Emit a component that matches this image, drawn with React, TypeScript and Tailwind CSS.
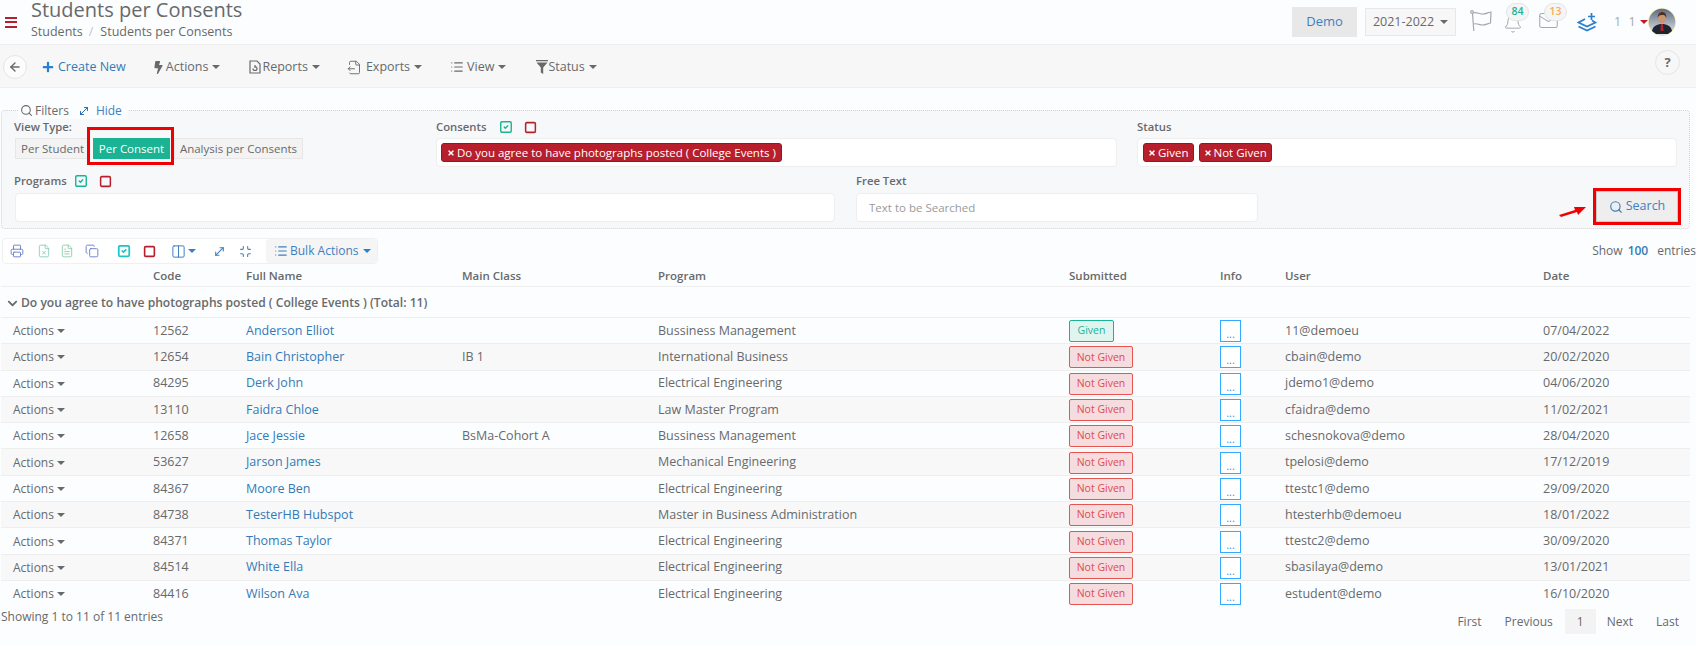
import { ArrowLeft, Bell, Columns2, Copy, FileOutput, FileText, FileX, List, Mail, Minimize, MoveDiagonal, Printer, Search, Square, SquareCheck } from 'lucide-react';
import { FaBolt, FaChevronDown, FaPlus, FaTimes } from 'react-icons/fa';

const rows = [
  ['12562', 'Anderson Elliot', '', 'Bussiness Management', 'Given', '11@demoeu', '07/04/2022'],
  ['12654', 'Bain Christopher', 'IB 1', 'International Business', 'Not Given', 'cbain@demo', '20/02/2020'],
  ['84295', 'Derk John', '', 'Electrical Engineering', 'Not Given', 'jdemo1@demo', '04/06/2020'],
  ['13110', 'Faidra Chloe', '', 'Law Master Program', 'Not Given', 'cfaidra@demo', '11/02/2021'],
  ['12658', 'Jace Jessie', 'BsMa-Cohort A', 'Bussiness Management', 'Not Given', 'schesnokova@demo', '28/04/2020'],
  ['53627', 'Jarson James', '', 'Mechanical Engineering', 'Not Given', 'tpelosi@demo', '17/12/2019'],
  ['84367', 'Moore Ben', '', 'Electrical Engineering', 'Not Given', 'ttestc1@demo', '29/09/2020'],
  ['84738', 'TesterHB Hubspot', '', 'Master in Business Administration', 'Not Given', 'htesterhb@demoeu', '18/01/2022'],
  ['84371', 'Thomas Taylor', '', 'Electrical Engineering', 'Not Given', 'ttestc2@demo', '30/09/2020'],
  ['84514', 'White Ella', '', 'Electrical Engineering', 'Not Given', 'sbasilaya@demo', '13/01/2021'],
  ['84416', 'Wilson Ava', '', 'Electrical Engineering', 'Not Given', 'estudent@demo', '16/10/2020'],
];

const cols = 'grid grid-cols-[152px_93px_216px_196px_217px_194px_151px_65px_258px_1fr]';

function Caret({ className = '' }: { className?: string }) {
  return <span className={`inline-block h-0 w-0 border-x-[4px] border-t-[4px] border-x-transparent border-t-current ${className}`} />;
}

function ToolbarItem({ icon, label, className }: { icon: React.ReactNode; label: string; className: string }) {
  return (
    <div className={`flex items-center ${className}`}>
      {icon}
      <span>{label}</span>
      <Caret className="ml-[4px]" />
    </div>
  );
}

function Tag({ label, tight }: { label: string; tight?: boolean }) {
  return (
    <span className={`flex h-[19px] items-center gap-[2px] rounded-[3px] border border-[#8f1823] bg-[#b71f2d] text-[11.500px] text-white whitespace-nowrap ${tight ? 'px-[4px]' : 'px-[5px]'}`}>
      <FaTimes size={8} />
      {label}
    </span>
  );
}

function FieldLabel({ label, toggles, gap }: { label: string; toggles?: boolean; gap?: string }) {
  return (
    <div className="flex h-[16px] items-center text-[11.300px] font-semibold text-[#676a6c]">
      <span className="whitespace-nowrap">{label}</span>
      {toggles && (
        <>
          <SquareCheck size={14} strokeWidth={2.4} className={`text-[#1ab394] ${gap}`} />
          <Square size={13} strokeWidth={2.8} className="ml-[11px] text-[#b71f2d]" />
        </>
      )}
    </div>
  );
}

function Avatar() {
  return (
    <svg width="28" height="28" viewBox="0 0 28 28">
      <defs>
        <linearGradient id="avatarBg" x1="0" y1="0" x2="0" y2="1">
          <stop offset="0" stopColor="#5d6b80" />
          <stop offset="1" stopColor="#e8ebf0" />
        </linearGradient>
      </defs>
      <circle cx="14" cy="14" r="13.7" fill="#eed98a" />
      <circle cx="14" cy="14" r="13.2" fill="url(#avatarBg)" />
      <path d="M4 23c1-5 5-7 10-7s9 2 10 7l-4 3H8z" fill="#1d2530" />
      <path d="M13 16h2l.6 7h-3.200z" fill="#b0212c" />
      <ellipse cx="14" cy="10.500" rx="4" ry="5" fill="#c99474" />
      <path d="M9.800 10c-.4-4 2-6 4.400-6s4.600 2 4 6c-.8-2.500-2-3-4.200-3s-3.500.6-4.200 3z" fill="#51301e" />
    </svg>
  );
}

export default function App() {
  return (
    <div className="h-[645px] w-[1696px] overflow-hidden bg-[#fcfdfe] font-['Open_Sans',sans-serif] text-[12.500px] text-[#676a6c]">
      {/* top bar */}
      <header className="flex h-[45px] items-center border-b border-[#eeeeee] pl-[5px]">
        <div className="flex w-[12px] flex-col gap-[2.500px]">
          <span className="h-[2px] bg-[#b71f2d]" />
          <span className="h-[2px] bg-[#b71f2d]" />
          <span className="h-[2px] bg-[#b71f2d]" />
        </div>
        <div className="ml-[14px] flex h-[45px] flex-col">
          <h1 className="mt-[-4px] h-[27px] text-[20px] leading-[27px] whitespace-nowrap">Students per Consents</h1>
          <div className="mt-[0.5px] flex gap-[6px] leading-[18px]">
            <span>Students</span>
            <span className="text-[#c4c4c4]">/</span>
            <span className="ml-[1px]">Students per Consents</span>
          </div>
        </div>
        <div className="ml-auto flex items-center pr-[20px]">
          <div className="flex h-[30px] w-[65px] items-center justify-center bg-[#e8e8e8] text-[13px] text-[#3f7fc1]">Demo</div>
          <div className="ml-[8px] flex h-[28px] w-[91px] items-center justify-center gap-[6px] border border-[#e8e8e8] bg-[#f7f7f8]">
            2021-2022
            <Caret />
          </div>
          <svg width="22" height="22" viewBox="0 0 22 22" fill="none" stroke="#a3a9ae" strokeWidth="1.200" className="mt-[-2px] ml-[14px]">
            <circle cx="2" cy="2" r="1.300" />
            <path d="M2.500 3.500 3.800 21" />
            <path d="M3 3c4-1.500 6 1.500 10 1 3 0 6-2 8-2l-.5 11c-2.500 .5-5 2-8 2-3.500 0-5-2-8.500-1" />
          </svg>
          <div className="relative ml-[11px] h-[30px] w-[24px]">
            <Bell size={20} strokeWidth={1.200} className="absolute top-[7px] left-0 text-[#a3a9ae]" />
            <span className="absolute top-[-4px] left-[3px] flex h-[18px] w-[23px] items-center justify-center rounded-full border border-[#e5e5e5] bg-[#f5f5f5] text-[10.500px] font-semibold text-[#1ab394]">84</span>
          </div>
          <div className="relative ml-[11px] h-[30px] w-[29px]">
            <Mail size={21} strokeWidth={1.200} className="absolute top-[3px] left-0 text-[#a3a9ae]" />
            <span className="absolute top-[-4px] left-[6px] flex h-[18px] w-[23px] items-center justify-center rounded-full border border-[#e5e5e5] bg-[#f5f5f5] text-[10.500px] font-semibold text-[#f8ac59]">13</span>
          </div>
          <svg width="20" height="19" viewBox="0 0 20 19" fill="none" stroke="#2a7fd0" strokeWidth="1.700" className="ml-[10px]">
            <path d="M8 6 1.500 9.500 10 13.500 18.500 9.500 15 7.500" />
            <path d="M1.500 13.500 10 17.500 18.500 13.500" />
            <path d="M14.500 0v7M11 3.500h7" />
          </svg>
          <span className="ml-[17px] w-[17px] tracking-[2px] whitespace-nowrap text-[#a3a9ae]">1 1</span>
          <Caret className="ml-[9px] text-[#b71f2d]" />
          <Avatar />
        </div>
      </header>

      {/* action toolbar */}
      <div className="flex h-[43px] items-center border-b border-[#eeeeee] bg-[#f7f7f7] pt-[2px] pr-[16px] pl-[3px]">
        <div className="flex h-[24px] w-[24px] items-center justify-center rounded-full border border-[#e5e5e5] bg-[#fcfcfc]">
          <ArrowLeft size={14} strokeWidth={2.400} className="text-[#676a6c]" />
        </div>
        <div className="ml-[15px] flex items-center text-[#337ab7]">
          <FaPlus size={12} className="text-[#2a7fd0]" />
          <span className="ml-[4px]">Create New</span>
        </div>
        <ToolbarItem className="ml-[26px]" label="Actions" icon={<FaBolt size={13} className="mr-[1px]" />} />
        <ToolbarItem
          className="ml-[29px]"
          label="Reports"
          icon={
            <svg width="12" height="14" viewBox="0 0 12 14" fill="none" stroke="currentColor" strokeWidth="1.200" className="mr-[1px]">
              <path d="M1 1h7l3 3v9H1z" />
              <path d="M4 8.500a2 2 0 1 0 2-2M6 5v3" />
            </svg>
          }
        />
        <ToolbarItem className="ml-[27px]" label="Exports" icon={<FileOutput size={15} strokeWidth={1.500} className="mr-[4px]" />} />
        <ToolbarItem className="ml-[28px]" label="View" icon={<List size={14} className="mr-[3px]" />} />
        <ToolbarItem
          className="ml-[30px]"
          label="Status"
          icon={
            <svg width="12" height="14" viewBox="0 0 12 14" fill="currentColor">
              <path d="M0 0h12v1.200H0zM.5 2.500h11L7.200 7.500V14l-2.400-1.500v-5z" />
            </svg>
          }
        />
        <div className="mt-[-9px] ml-auto flex h-[25px] w-[25px] items-center justify-center rounded-full border border-[#e5e5e5] text-[13px] font-bold">?</div>
      </div>

      {/* filters */}
      <section className="relative mt-[22px] ml-[1px] h-[119px] w-[1689px] rounded-[4px] border border-dotted border-[#d4d4d4] bg-[#f7f8fa] pt-[8px] pl-[12px]">
        <div className="absolute top-[-9px] left-[16px] flex h-[17px] items-center bg-[#fcfdfe] pr-[6px] pl-[2px] text-[12px]">
          <Search size={13} />
          <span className="ml-[2px]">Filters</span>
          <MoveDiagonal size={12} className="ml-[9px] text-[#2a6db5]" />
          <span className="ml-[6px] text-[#3f7fc1]">Hide</span>
        </div>
        <div className="flex">
          <div className="w-[422px]">
            <FieldLabel label="View Type:" />
            <div className="mt-[3px] ml-[1px] flex h-[21px] items-center text-[11.500px]">
              <span className="flex h-[21px] w-[75px] items-center border border-[#e7e7e7] bg-[#f3f3f3] pl-[5px] whitespace-nowrap">Per Student</span>
              <span className="relative ml-[3px] flex h-[21px] w-[77px] items-center justify-center bg-[#1ab394] text-white">
                Per Consent
                <span className="absolute top-[-11px] right-[-4px] bottom-[-6px] left-[-6px] border-[3px] border-[#f00000]" />
              </span>
              <span className="ml-[4px] flex h-[21px] w-[129px] items-center justify-center border border-[#e7e7e7] bg-[#f3f3f3] whitespace-nowrap">Analysis per Consents</span>
            </div>
          </div>
          <div className="w-[681px]">
            <FieldLabel label="Consents" toggles gap="ml-[13px]" />
            <div className="mt-[3px] flex h-[29px] items-center rounded-[4px] border border-[#eeeeee] bg-white pl-[4px]">
              <Tag label="Do you agree to have photographs posted ( College Events )" />
            </div>
          </div>
          <div className="ml-[20px] w-[540px]">
            <FieldLabel label="Status" />
            <div className="mt-[3px] flex h-[29px] items-center gap-[5px] rounded-[4px] border border-[#eeeeee] bg-white pl-[5px]">
              <Tag tight label="Given" />
              <Tag tight label="Not Given" />
            </div>
          </div>
        </div>
        <div className="mt-[6px] flex">
          <div className="ml-[1px] w-[820px]">
            <div className="ml-[-1px]">
              <FieldLabel label="Programs" toggles gap="ml-[7px]" />
            </div>
            <div className="mt-[4px] h-[29px] rounded-[4px] border border-[#eeeeee] bg-white" />
          </div>
          <div className="ml-[21px] w-[402px]">
            <FieldLabel label="Free Text" />
            <div className="mt-[4px] flex h-[29px] items-center rounded-[4px] border border-[#eeeeee] bg-white pl-[12px] text-[11.500px] text-[#9a9a9a]">Text to be Searched</div>
          </div>
          <svg width="27" height="11" viewBox="0 0 27 11" className="mt-[33px] ml-[301px]">
            <path d="M0 9 16 4 15 1 27 1 19 9 18 6 2 11z" fill="#f00000" />
          </svg>
          <div className="mt-[15px] ml-[7px] h-[37px] w-[88px] border-[3px] border-[#f00000]">
            <div className="flex h-full items-center justify-center gap-[3px] border border-[#c9c9c9] bg-[#eeeeee] text-[#3f7fc1]">
              <Search size={14} />
              Search
            </div>
          </div>
        </div>
      </section>

      {/* table tools */}
      <div className="mt-[9px] flex h-[26px] items-center">
        <div className="ml-[2px] flex h-[26px] w-[376px] items-center rounded-[4px] border border-[#f0f0f0] bg-white pl-[7px]">
          <Printer size={14} strokeWidth={1.600} className="text-[#6b7fc8]" />
          <FileX size={14} strokeWidth={1.400} className="ml-[13px] text-[#7fc9b5]" />
          <FileText size={14} strokeWidth={1.400} className="ml-[9px] text-[#7fc9a0]" />
          <Copy size={14} strokeWidth={1.600} className="ml-[11px] text-[#6b7fc8]" />
          <SquareCheck size={14} strokeWidth={3} className="ml-[18px] text-[#1cc4c4]" />
          <Square size={13} strokeWidth={3} className="ml-[12px] text-[#b71f2d]" />
          <Columns2 size={15} strokeWidth={1.600} className="ml-[15px] text-[#3f7fc1]" />
          <Caret className="ml-[2px] text-[#3f7fc1]" />
          <MoveDiagonal size={13} className="ml-[17px] text-[#3f7fc1]" />
          <Minimize size={13} className="ml-[13px] text-[#3f7fc1]" />
          <div className="ml-[14px] flex h-full flex-1 items-center rounded-[4px] bg-[#f5f5f5] pl-[8px] text-[12px] whitespace-nowrap text-[#3f7fc1]">
            <List size={14} />
            <span className="ml-[2px]">Bulk Actions</span>
            <Caret className="ml-[4px] text-[#2a7fd0]" />
          </div>
        </div>
        <div className="ml-auto flex whitespace-nowrap text-[12px]">
          <span>Show</span>
          <span className="ml-[5px] font-semibold text-[#337ab7]">100</span>
          <span className="ml-[9px]">entries</span>
        </div>
      </div>

      {/* table */}
      <div className="ml-[1px] w-[1689px]">
        <div className={`${cols} h-[23px] items-center border-b border-[#eeeeee] pt-[2px] text-[11.500px] font-semibold`}>
          <span />
          <span>Code</span>
          <span>Full Name</span>
          <span>Main Class</span>
          <span>Program</span>
          <span />
          <span>Submitted</span>
          <span>Info</span>
          <span>User</span>
          <span>Date</span>
        </div>
        <div className="flex h-[30px] items-center pt-[2px] pl-[6px] text-[12.100px] font-semibold">
          <FaChevronDown size={11} />
          <span className="ml-[3px]">Do you agree to have photographs posted ( College Events ) (Total: 11)</span>
        </div>
        {rows.map((r, i) => (
          <div key={r[0]} className={`${cols} h-[26.300px] items-center border-t border-[#eeeeee] pt-[1px] ${i % 2 ? 'bg-[#f8f8f9]' : ''}`}>
            <span className="flex items-center pl-[12px] text-[12px]">
              Actions
              <Caret className="ml-[3px]" />
            </span>
            <span>{r[0]}</span>
            <span className="text-[#337ab7]">{r[1]}</span>
            <span>{r[2]}</span>
            <span className="col-span-2">{r[3]}</span>
            <span>
              {r[4] === 'Given' ? (
                <span className="inline-flex h-[22px] w-[45px] items-center justify-center rounded-[2px] border border-[#1ab394] bg-[#e0f5f0] text-[10.500px] text-[#1ab394]">Given</span>
              ) : (
                <span className="inline-flex h-[22px] w-[64px] items-center justify-center rounded-[2px] border border-[#e8544f] bg-[#f5dcdf] text-[10.500px] text-[#e04b4b]">Not Given</span>
              )}
            </span>
            <span className="flex h-[22px] w-[21px] items-end justify-center border border-[#33aaff] bg-white pb-[2px] text-[11px] leading-[11px] text-[#4a90e2]">...</span>
            <span>{r[5]}</span>
            <span>{r[6]}</span>
          </div>
        ))}
      </div>

      {/* footer */}
      <div className="mt-[3px] flex pr-[17px] pl-[1px] text-[12px]">
        <div className="mt-[-1px] leading-[18px] whitespace-nowrap">Showing 1 to 11 of 11 entries</div>
        <div className="ml-auto flex h-[25px] items-center">
          <span>First</span>
          <span className="ml-[23px]">Previous</span>
          <span className="ml-[12px] flex h-[25px] w-[31px] items-center justify-center bg-[#f3f3f3]">1</span>
          <span className="ml-[11px]">Next</span>
          <span className="ml-[23px]">Last</span>
        </div>
      </div>
    </div>
  );
}
